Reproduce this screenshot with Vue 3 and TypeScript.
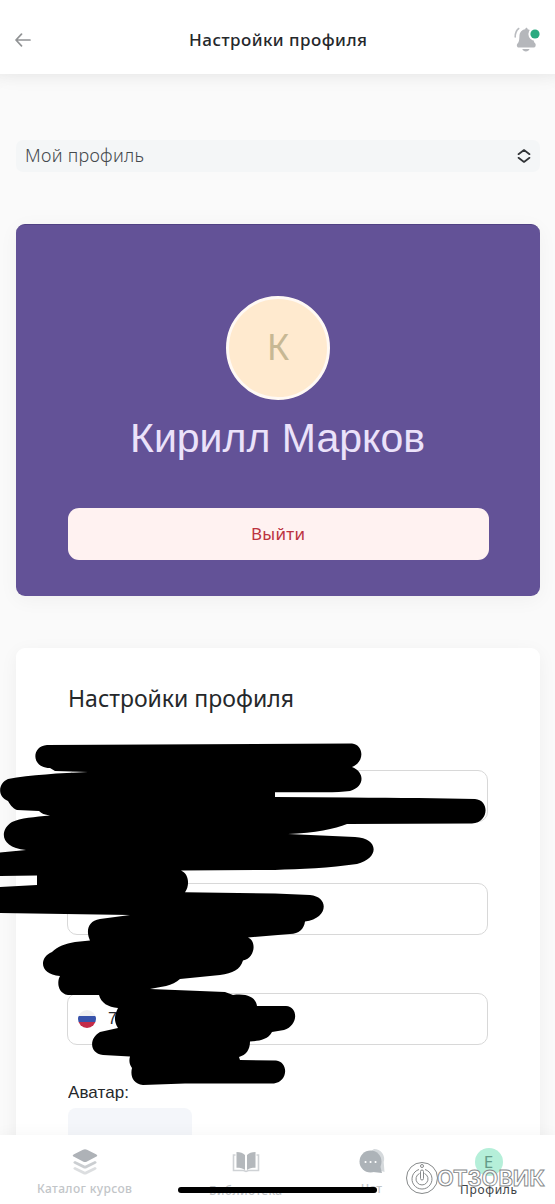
<script setup lang="ts">
const userName: string = 'Кирилл Марков'
const initial: string = userName.charAt(0)
const phonePrefix: string = '7'
</script>

<template>
  <div class="screen">
    <header class="header">
      <svg class="back" viewBox="0 0 16 14" width="16" height="14">
        <path d="M15 7H1.5M6.5 1.2L1 7l5.5 5.8" />
      </svg>
      <h1 class="title"><svg width="179" height="26"><text x="0" y="19" textLength="178">Настройки профиля</text></svg></h1>
      <svg class="bell" viewBox="0 0 28 28" width="28" height="28">
        <path class="bell-wave" d="M5.7 2.5C3.4 4.2 2.2 7 2.2 11" />
        <path class="bell-body" d="M12.3 3.3c0-2 2.3-2 2.3 0 3.5.8 5.5 3 5.6 7 .1 4.2.7 6 2.1 7.3.8.9.4 3.9-1.2 3.9H5.6c-1.8 0-2.2-2.8-1.2-3.8C6 16.2 6.2 14.2 6.4 10.5 6.6 6 8.6 4 12.3 3.3z" />
        <path class="bell-body" d="M9.3 23h7.2c-.7 3.2-6.5 3.2-7.2 0z" />
        <circle class="bell-gap" cx="22" cy="8" r="6.6" />
        <circle class="bell-dot" cx="22" cy="8" r="4.6" />
      </svg>
    </header>

    <main class="content">
      <div class="select">
        <svg width="122" height="28"><text x="0" y="20" textLength="119">Мой профиль</text></svg>
        <svg class="chevrons" viewBox="0 0 14 14" width="14" height="14">
          <path d="M1.5 5.2L7 1l5.5 4.2M1.5 8.8L7 13l5.5-4.2" />
        </svg>
      </div>

      <section class="hero">
        <div class="avatar">{{ initial }}</div>
        <div class="name">
          <svg width="300" height="56"><text x="2" y="41" textLength="295">{{ userName }}</text></svg>
        </div>
        <button class="logout" type="button">
          <svg width="54" height="26"><text x="0" y="19" textLength="54">Выйти</text></svg>
        </button>
      </section>

      <section class="settings">
        <h2 class="subtitle"><svg width="230" height="36"><text x="0" y="26" textLength="226">Настройки профиля</text></svg></h2>
        <div class="field"></div>
        <div class="field second"></div>
        <div class="field phone">
          <svg class="flag" viewBox="0 0 18 18" width="18" height="18">
            <defs><clipPath id="flag-clip"><circle cx="9" cy="9" r="9" /></clipPath></defs>
            <g clip-path="url(#flag-clip)">
              <path fill="#f0f0f2" d="M0 0h18v6H0z" />
              <path fill="#3853ab" d="M0 6h18v6H0z" />
              <path fill="#c42c49" d="M0 12h18v6H0z" />
            </g>
          </svg>
          <span>{{ phonePrefix }}</span>
        </div>
        <div class="avatar-label"><svg width="64" height="24"><text x="0" y="17" textLength="61">Аватар:</text></svg></div>
        <div class="upload"></div>
      </section>
    </main>

    <nav class="tabs">
      <div class="tab catalog">
        <svg viewBox="0 0 26 28" width="26" height="28">
          <path fill="#dcdee0" d="M3 19l10 4.7L23 19c2.2 1 2.2 2 0 3l-8 4q-2 1-4 0l-8-4c-2.200-1-2.200-2 0-3z" />
          <path fill="#cbced1" d="M3 13l10 4.700L23 13c2.200 1 2.200 2 0 3l-8 4q-2 1-4 0l-8-4c-2.200-1-2.200-2 0-3z" />
          <path fill="#aeb2b7" d="M11 1.800q2-1 4 0l9 4.400c1.700.9 1.700 1.700 0 2.600l-9 4.700q-2 1-4 0L2 8.800c-1.700-.9-1.700-1.700 0-2.600z" />
        </svg>
        <svg width="96" height="18"><text x="0" y="13" textLength="95">Каталог курсов</text></svg>
      </div>
      <div class="tab library">
        <svg viewBox="0 0 28 28" width="28" height="28">
          <path fill="none" stroke="#cfd2d5" stroke-width="1.600" d="M3.500 7H1.500v15.500h10l2.500 1 2.500-1h10V7h-2" />
          <path fill="#b4b8bc" d="M4.500 4c4 0 6.500 1 8.500 3v15c-2-1.600-4.700-2.200-8.500-2.200zM23.500 4c-4 0-6.500 1-8.500 3v15c2-1.600 4.700-2.200 8.500-2.200z" />
        </svg>
        <svg width="74" height="18"><text x="0" y="15" textLength="73">Библиотека</text></svg>
      </div>
      <div class="tab chat">
        <svg viewBox="0 0 28 28" width="28" height="28">
          <path fill="#d5d9dc" d="M16 1a10 10 0 0 1 9.700 13l.8 10-6-2A11 11 0 0 1 16 1z" />
          <circle fill="#adb3b8" cx="12.500" cy="13.500" r="11" />
          <path fill="#adb3b8" d="M22 17l2 8-9-1z" />
          <path stroke="#fff" stroke-width="2" stroke-linecap="round" d="M7.500 14h.1M12.500 14h.1M17.500 14h.1" />
        </svg>
        <svg width="22" height="18"><text x="0" y="13" textLength="21">Чат</text></svg>
      </div>
      <div class="tab profile">
        <div class="badge">Е</div>
        <svg width="58" height="18"><text x="0" y="14" textLength="57">Профиль</text></svg>
      </div>
      <div class="home-bar"></div>
    </nav>

    <svg class="marker" viewBox="0 730 555 370" width="555" height="370">
      <path d="M47 745L352 743.500C364 745 365 762 352 767C365 772 365 787 350 791Q340 792.300 325 792.300L275 792.300V797L350 797.500C400 798 440 798 475 799C490 800 489 823 472 823.500L347 824C335 829 315 833 288 834L355 837C379 838 380 858 357 864C330 868 300 869 275 870L181 870.500C189 874 190 885 185 892.300L275 893.500L310 895C330 897 328 919 305 921.500C304 929 299 934 290 934L248 937.500C257 941 255 958 243 960.500C240 970 233 973 220 975L180 979C173 986 160 987 150 989L225 992L233 995C248 993 256 998 257 1006L286 1006C299 1007 298 1026 284 1030L272 1032C268 1040 258 1041 250 1041.500C250 1050 246 1055 239 1057L240 1060L276 1060.500C289 1062 288 1082 274 1083.500L185 1083.500L143 1085C133 1084 130 1076 132 1068C129 1064 129 1060 130 1056.500L103 1055C89 1053 89 1038 100 1032L118 1028C113 1020 115 1014 118 1008C108 1007 101 1003 99 995L68 995C57 993 57 981 60 976C40 975 38 958 52 952C58 946 65 944 75 942L90 940.500C86 932 87 921 100 919L130 915L0 913V887L37 885V875.500L0 876V852.500L26 850C0 848-1 830 12 822C20 818 35 817 50 815.500Q42 814.500 39 811L17 810C12 808 10 804 8 801C-3 797-2 783 8 779C30 775 60 773 88 772L55 771L50 768C31 768 31 746 47 745Z" />
    </svg>

    <svg class="watermark" viewBox="0 0 146 36" width="146" height="36">
      <g fill="none" stroke="#fff" stroke-width="2.600">
        <circle cx="17" cy="17" r="15" />
        <circle cx="17" cy="18" r="8.500" />
      </g>
      <g fill="none" stroke="#86898a" stroke-width="1">
        <circle cx="17" cy="17" r="15.500" />
        <path d="M14 8.500a10 10 0 1 0 6 0M14.500 12.500a6 6 0 1 0 5 0" />
        <rect x="15.500" y="9" width="3" height="10" rx="1.500" fill="#fff" />
        <circle cx="17" cy="5" r="1.500" />
      </g>
      <text x="32" y="25" textLength="108" lengthAdjust="spacingAndGlyphs">ОТЗОВИК</text>
    </svg>
  </div>
</template>

<style>
body { margin: 0; }
</style>

<style scoped>
.screen {
  position: relative;
  box-sizing: border-box;
  width: 555px;
  height: 1204px;
  overflow: hidden;
  display: flex;
  flex-direction: column;
  background: #fafafa;
  color: #25282b;
  font-family: "Noto Sans", "Open Sans", sans-serif;
}
svg { display: block; flex: none; }
text { fill: currentColor; }
h1, h2 { margin: 0; font-weight: inherit; }
.header {
  box-sizing: border-box;
  height: 74px;
  flex: none;
  display: flex;
  align-items: center;
  justify-content: space-between;
  padding: 6px 14px 0 15px;
  background: #fff;
  box-shadow: 0 4px 18px rgba(0, 0, 0, .045);
}
.back { fill: none; stroke: #919395; stroke-width: 1.7; stroke-linecap: round; stroke-linejoin: round; }
.title { font-size: 17px; font-weight: 500; margin-left: 13px; }
.bell { margin-top: -1px; }
.bell-wave { fill: none; stroke: #babcc0; stroke-width: 1.6; stroke-linecap: round; }
.bell-body { fill: #b5b7bb; }
.bell-gap { fill: #fff; }
.bell-dot { fill: #2aaa80; }
.content {
  height: 1061px;
  flex: none;
  overflow: hidden;
  box-sizing: border-box;
  padding: 66px 15px 0 16px;
}
.header + .content { position: relative; box-shadow: inset 0 12px 16px -12px rgba(0, 0, 0, .055); }
.select {
  box-sizing: border-box;
  height: 32px;
  display: flex;
  align-items: center;
  justify-content: space-between;
  padding: 0 9px;
  border-radius: 7px;
  background: #f4f6f7;
  font-size: 18px;
  font-weight: 300;
  color: #45494d;
}
.chevrons { fill: none; stroke: #303336; stroke-width: 1.7; stroke-linecap: round; stroke-linejoin: round; }
.hero {
  box-sizing: border-box;
  height: 372px;
  margin-top: 52px;
  padding: 72px 51px 0;
  display: flex;
  flex-direction: column;
  align-items: center;
  border-radius: 9px;
  background: #635297;
  border-top: 1px solid #514283;
  box-shadow: 0 4px 20px rgba(0, 0, 0, .045);
}
.avatar {
  box-sizing: border-box;
  width: 104px;
  height: 104px;
  flex: none;
  margin-top: -1px;
  border: 3px solid #fff9f4;
  border-radius: 50%;
  background: #ffeacf;
  color: #c7b894;
  font-size: 36px;
  line-height: 96px;
  text-align: center;
}
.name {
  height: 56px;
  margin-top: 11px;
  color: #ebe2fa;
  font-family: "Liberation Sans", Arial, sans-serif;
  font-size: 41px;
}
.logout {
  width: 421px;
  height: 52px;
  flex: none;
  margin-top: 41px;
  padding: 0;
  border: 0;
  border-radius: 11px;
  display: flex;
  align-items: center;
  justify-content: center;
  background: #fff2f1;
  color: #bc3340;
  font-family: inherit;
  font-size: 17px;
}
.settings {
  box-sizing: border-box;
  height: 530px;
  margin-top: 52px;
  padding: 33px 52px 0 51px;
  border-radius: 9px;
  background: #fff;
  box-shadow: 0 4px 18px rgba(0, 0, 0, .05);
}
.subtitle { font-size: 23px; height: 36px; margin-left: 1px; }
.field {
  box-sizing: border-box;
  height: 52px;
  margin-top: 53px;
  border: 1.5px solid #d8d8d8;
  border-radius: 10px;
}
.field.second { margin-top: 61px; }
.field.phone {
  margin-top: 58px;
  padding-left: 10px;
  display: flex;
  align-items: center;
  gap: 12px;
  font: 16px "Liberation Sans", Arial, sans-serif;
}
.avatar-label {
  margin-top: 36px;
  margin-left: 1px;
  height: 24px;
  font: 17px "Liberation Sans", Arial, sans-serif;
}
.upload { width: 124px; height: 40px; margin-top: 3px; margin-left: 1px; border-radius: 8px; background: #f4f6fa; }
.tabs {
  position: relative;
  box-sizing: border-box;
  height: 69px;
  flex: none;
  display: grid;
  grid-template-columns: 170px 151px 101px 133px;
  padding-top: 13px;
  background: #fff;
  box-shadow: 0 -2px 14px rgba(0, 0, 0, .035);
  font-size: 12px;
  font-weight: 500;
  color: #c2c5c8;
}
.tab { display: flex; flex-direction: column; align-items: center; gap: 4px; }
.profile { color: #3d4245; font-weight: 400; }
.badge {
  width: 28px;
  height: 28px;
  border-radius: 50%;
  background: #b5efd9;
  color: #649b88;
  font-size: 17px;
  line-height: 28px;
  text-align: center;
}
.home-bar {
  position: absolute;
  left: 178px;
  bottom: 11px;
  width: 199px;
  height: 6px;
  border-radius: 3px;
  background: #000;
}
.marker { position: absolute; left: 0; top: 730px; fill: #000; }
.watermark { position: absolute; left: 405px; top: 1161px; }
.watermark text {
  font: 700 21px Inter, "Liberation Sans", sans-serif;
  fill: #fff;
  fill-opacity: .75;
  stroke: #85888a;
  stroke-width: .9px;
}
</style>
